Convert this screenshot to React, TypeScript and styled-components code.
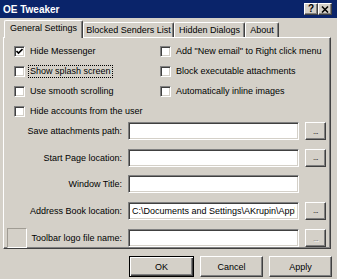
import styled, { createGlobalStyle } from "styled-components";

const GlobalStyle = createGlobalStyle`
  html, body {
    margin: 0;
    padding: 0;
    background: #d4d0c8;
  }
  body {
    font-family: "Liberation Sans", Arial, sans-serif;
    font-size: 9px;
    color: #000;
  }
`;

const Window = styled.div`
  width: 337px;
  height: 279px;
  background: #d4d0c8;
  overflow: hidden;
  display: flex;
  flex-direction: column;
`;

const TitleBar = styled.div`
  height: 18px;
  flex-shrink: 0;
  background: #0a246a;
  display: flex;
  align-items: center;
  justify-content: space-between;
  padding: 0 5px 0 3px;
  box-sizing: border-box;
`;

const Title = styled.span`
  color: #fff;
  font-weight: bold;
  font-size: 10px;
`;

const CaptionButtons = styled.div`
  display: flex;
`;

const CaptionButton = styled.div`
  width: 14px;
  height: 12px;
  box-sizing: border-box;
  background: #d4d0c8;
  border: 1px solid;
  border-color: #fff #404040 #404040 #fff;
  box-shadow: inset -1px -1px #808080;
  display: flex;
  align-items: center;
  justify-content: center;
  font-weight: bold;
  font-size: 10px;
  line-height: 1;
`;

const Body = styled.div`
  padding: 0 6px 0 3px;
  display: flex;
  flex-direction: column;
`;

const TabStrip = styled.div`
  display: flex;
  align-items: flex-end;
  height: 17px;
  margin-top: 2px;
  padding-left: 1px;
`;

const Tab = styled.div<{ $w: number; $active?: boolean }>`
  width: ${(p) => p.$w}px;
  height: ${(p) => (p.$active ? 18 : 15)}px;
  margin-bottom: ${(p) => (p.$active ? -1 : 0)}px;
  position: relative;
  z-index: ${(p) => (p.$active ? 1 : 0)};
  background: #d4d0c8;
  box-sizing: border-box;
  border-top: 1px solid #fff;
  border-left: 1px solid #fff;
  border-right: 1px solid #404040;
  box-shadow: inset -1px 0 #808080;
  border-radius: 2px 2px 0 0;
  display: flex;
  justify-content: center;
  padding-top: 2px;
  line-height: 11px;
  white-space: nowrap;
`;

const Panel = styled.div`
  height: 212px;
  box-sizing: border-box;
  border: 1px solid;
  border-color: #fff #404040 #404040 #fff;
  box-shadow: inset -1px -1px #808080;
`;

const CheckGrid = styled.div`
  display: grid;
  grid-template-columns: 146px 1fr;
  grid-auto-rows: 20px;
  padding: 3px 0 0 10px;
`;

const CheckItem = styled.label`
  display: flex;
  align-items: center;
  gap: 4px;
  white-space: nowrap;
`;

const Box = styled.span`
  width: 11px;
  height: 11px;
  flex-shrink: 0;
  box-sizing: border-box;
  background: #fff;
  border: 1px solid;
  border-color: #808080 #fff #fff #808080;
  box-shadow: inset 1px 1px #404040, inset -1px -1px #d4d0c8;
  display: flex;
  align-items: center;
  justify-content: center;
`;

const CheckText = styled.span<{ $focused?: boolean }>`
  padding: 0 1px;
  outline: ${(p) => (p.$focused ? "1px dotted #000" : "none")};
  line-height: 11px;
`;

const Fields = styled.div`
  display: flex;
  flex-direction: column;
  gap: 8.5px;
  margin-top: 1px;
`;

const FieldRow = styled.div`
  display: grid;
  grid-template-columns: 118px 171px 21px;
  column-gap: 6px;
  height: 18px;
  align-items: center;
`;

const LabelCell = styled.div`
  display: flex;
  align-items: center;
  white-space: nowrap;
`;

const Label = styled.span`
  margin-left: auto;
`;

const LogoBox = styled.div`
  width: 20px;
  height: 20px;
  margin-left: 3px;
  box-sizing: border-box;
  border: 1px solid;
  border-color: #a09c94 #fff #fff #a09c94;
`;

const TextBox = styled.input`
  height: 18px;
  width: 100%;
  box-sizing: border-box;
  margin: 0;
  border: 1px solid;
  border-color: #808080 #fff #fff #808080;
  box-shadow: inset 1px 1px #404040, inset -1px -1px #d4d0c8;
  background: #fff;
  font-family: "Liberation Sans", Arial, sans-serif;
  font-size: 9px;
  padding: 0 3px;
  outline: none;
`;

const BrowseButton = styled.div<{ $disabled?: boolean }>`
  width: 21px;
  height: 18px;
  box-sizing: border-box;
  border: 1px solid;
  border-color: #fff #404040 #404040 #fff;
  box-shadow: inset -1px -1px #808080;
  display: flex;
  align-items: center;
  justify-content: center;
  font-size: 8px;
  color: ${(p) => (p.$disabled ? "#808080" : "#000")};
  text-shadow: ${(p) => (p.$disabled ? "1px 1px #fff" : "none")};
  letter-spacing: -0.5px;
`;

const ButtonRow = styled.div`
  display: flex;
  justify-content: flex-end;
  gap: 6px;
  margin-top: 7px;
  margin-right: -1px;
`;

const PushButton = styled.div<{ $default?: boolean }>`
  width: ${(p) => (p.$default ? 65 : 63)}px;
  height: 21px;
  box-sizing: border-box;
  display: flex;
  align-items: center;
  justify-content: center;
  ${(p) =>
    p.$default
      ? `border: 1px solid #000;
         box-shadow: inset 1px 1px #fff, inset -1px -1px #404040, inset -2px -2px #808080;`
      : `border: 1px solid;
         border-color: #fff #404040 #404040 #fff;
         box-shadow: inset -1px -1px #808080;`}
`;

const CheckMark = () => (
  <svg width="7" height="7" viewBox="0 0 7 7">
    <path d="M0.5 3 L2.5 5 L6.5 1" fill="none" stroke="#000" strokeWidth="1.6" />
  </svg>
);

const CloseGlyph = () => (
  <svg width="8" height="7" viewBox="0 0 8 7">
    <path d="M1 0.5 L7 6.5 M7 0.5 L1 6.5" stroke="#000" strokeWidth="1.5" />
  </svg>
);

type Check = { text: string; checked?: boolean; focused?: boolean };

const checks: Check[] = [
  { text: "Hide Messenger", checked: true },
  { text: 'Add "New email" to Right click menu' },
  { text: "Show splash screen", focused: true },
  { text: "Block executable attachments" },
  { text: "Use smooth scrolling" },
  { text: "Automatically inline images" },
  { text: "Hide accounts from the user" },
];

type Field = { label: string; value?: string; browse?: boolean; disabled?: boolean; logo?: boolean };

const fields: Field[] = [
  { label: "Save attachments path:", browse: true },
  { label: "Start Page location:", browse: true },
  { label: "Window Title:" },
  { label: "Address Book location:", value: "C:\\Documents and Settings\\AKrupin\\Application Data\\Microsoft\\Address Book", browse: true },
  { label: "Toolbar logo file name:", browse: true, disabled: true, logo: true },
];

const tabs = [
  { text: "General Settings", w: 79, active: true },
  { text: "Blocked Senders List", w: 91 },
  { text: "Hidden Dialogs", w: 71 },
  { text: "About", w: 34 },
];

export default function App() {
  return (
    <Window>
      <GlobalStyle />
      <TitleBar>
        <Title>OE Tweaker</Title>
        <CaptionButtons>
          <CaptionButton>?</CaptionButton>
          <CaptionButton>
            <CloseGlyph />
          </CaptionButton>
        </CaptionButtons>
      </TitleBar>
      <Body>
        <TabStrip>
          {tabs.map((t) => (
            <Tab key={t.text} $w={t.w} $active={t.active}>
              {t.text}
            </Tab>
          ))}
        </TabStrip>
        <Panel>
          <CheckGrid>
            {checks.map((c) => (
              <CheckItem key={c.text}>
                <Box>{c.checked && <CheckMark />}</Box>
                <CheckText $focused={c.focused}>{c.text}</CheckText>
              </CheckItem>
            ))}
          </CheckGrid>
          <Fields>
            {fields.map((f) => (
              <FieldRow key={f.label}>
                <LabelCell>
                  {f.logo && <LogoBox />}
                  <Label>{f.label}</Label>
                </LabelCell>
                <TextBox readOnly value={f.value ?? ""} />
                {f.browse && <BrowseButton $disabled={f.disabled}>...</BrowseButton>}
              </FieldRow>
            ))}
          </Fields>
        </Panel>
        <ButtonRow>
          <PushButton $default>OK</PushButton>
          <PushButton>Cancel</PushButton>
          <PushButton>Apply</PushButton>
        </ButtonRow>
      </Body>
    </Window>
  );
}
